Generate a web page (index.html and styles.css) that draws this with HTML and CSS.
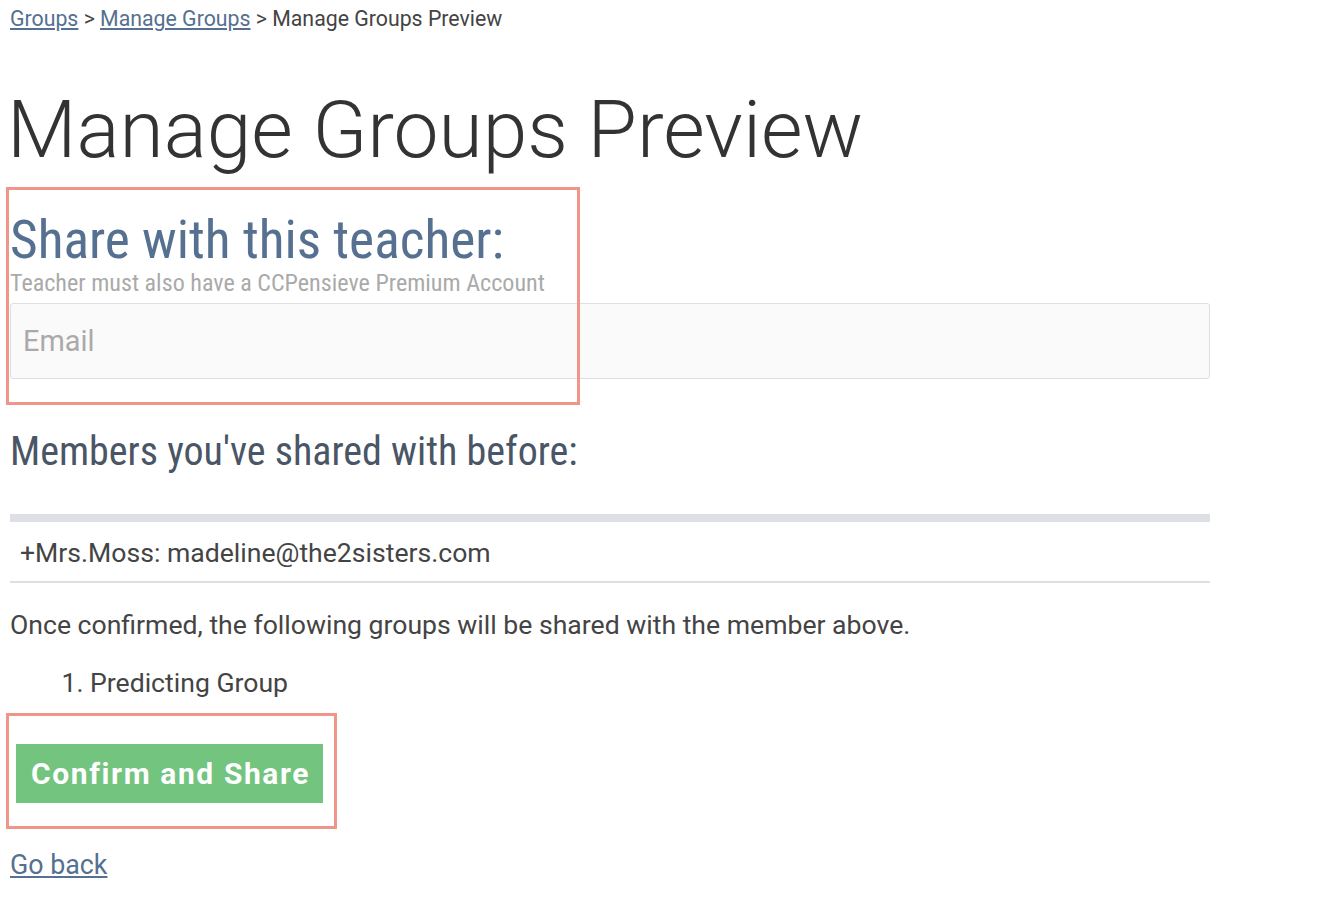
FILE: index.html
```html
<!DOCTYPE html>
<html>
<head>
<meta charset="utf-8">
<link rel="stylesheet" href="styles.css">
</head>
<body>
<div class="page">
  <nav class="crumbs"><a href="#">Groups</a> &gt; <a href="#">Manage Groups</a> &gt; Manage Groups Preview</nav>
  <h1 class="title">Manage Groups Preview</h1>
  <section class="share">
    <h2 class="share-title">Share with this teacher:</h2>
    <p class="hint">Teacher must also have a CCPensieve Premium Account</p>
    <input class="email" type="text" placeholder="Email">
    <div class="mark mark-share"></div>
  </section>
  <h3 class="members-title">Members you've shared with before:</h3>
  <table class="members">
    <thead><tr><th></th></tr></thead>
    <tbody><tr><td>+Mrs.Moss: madeline@the2sisters.com</td></tr></tbody>
  </table>
  <p class="note">Once confirmed, the following groups will be shared with the member above.</p>
  <ol class="groups"><li>Predicting Group</li></ol>
  <div class="confirm">
    <button class="btn">Confirm and Share</button>
    <div class="mark mark-btn"></div>
  </div>
  <a class="back" href="#">Go back</a>
</div>
</body>
</html>
```
FILE: styles.css
```css
html, body { margin: 0; padding: 0; background: #fff; }
body { font-family: Roboto, "Noto Sans", sans-serif; color: #444; }
.page { padding: 0 10px; width: 1200px; }
.crumbs { font-size: 21.3px; line-height: 24px; padding-top: 7px; color: #444; }
.crumbs a { color: #557090; text-decoration: underline; }
.title { font-weight: 300; font-size: 80.3px; line-height: 100px; margin: 48.5px 0 0 -3px; color: #333; }
.share { position: relative; }
.share-title { font-family: "Roboto Condensed", "Liberation Sans Narrow", Roboto, sans-serif; font-weight: 400; font-size: 53.4px; line-height: 60px; color: #557090; margin: 30.3px 0 0; }
.hint { font-family: "Roboto Condensed", "Liberation Sans Narrow", Roboto, sans-serif; font-size: 24.1px; line-height: 26px; color: #aaa; margin: 0 0 7px; }
.email { display: block; box-sizing: border-box; width: 1200px; height: 76px; background: #fafafa; border: 1px solid #dcdfe3; border-radius: 3px; font-family: Roboto, sans-serif; font-size: 28.9px; padding: 0 12px; margin: 0; outline: none; }
.email::placeholder { color: #aaa; }
.mark { position: absolute; border: 3px solid #f0958a; box-sizing: border-box; pointer-events: none; }
.mark-share { left: -4px; top: -23px; width: 574px; height: 218px; }
.members-title { font-family: "Roboto Condensed", "Liberation Sans Narrow", Roboto, sans-serif; font-weight: 400; font-size: 40px; line-height: 48px; color: #4a5566; margin: 49.3px 0 0; }
.members { width: 1200px; border-collapse: separate; border-spacing: 0; margin-top: 37.7px; }
.members th { height: 0; padding: 0; border-top: 8px solid #dcdfe3; }
.members td { font-size: 26.6px; line-height: 30px; padding: 16px 10px 13px; border-bottom: 2px solid #dcdfe3; color: #444; }
.note { font-size: 26.6px; line-height: 30px; margin: 27px 0 0; }
.groups { font-size: 26.6px; line-height: 30px; margin: 28px 0 0; padding-left: 80px; }
.confirm { position: relative; padding: 46px 0 47px 6px; }
.btn { display: block; background: #72c47f; color: #fff; border: none; font-family: Roboto, sans-serif; font-weight: 700; font-size: 30px; letter-spacing: 1.6px; height: 59px; padding: 0 13px 0 15px; }
.mark-btn { left: -4px; top: 15px; width: 331px; height: 116px; }
.back { display: inline-block; font-size: 26.8px; line-height: 30px; color: #557090; text-decoration: underline; vertical-align: top; }
```
